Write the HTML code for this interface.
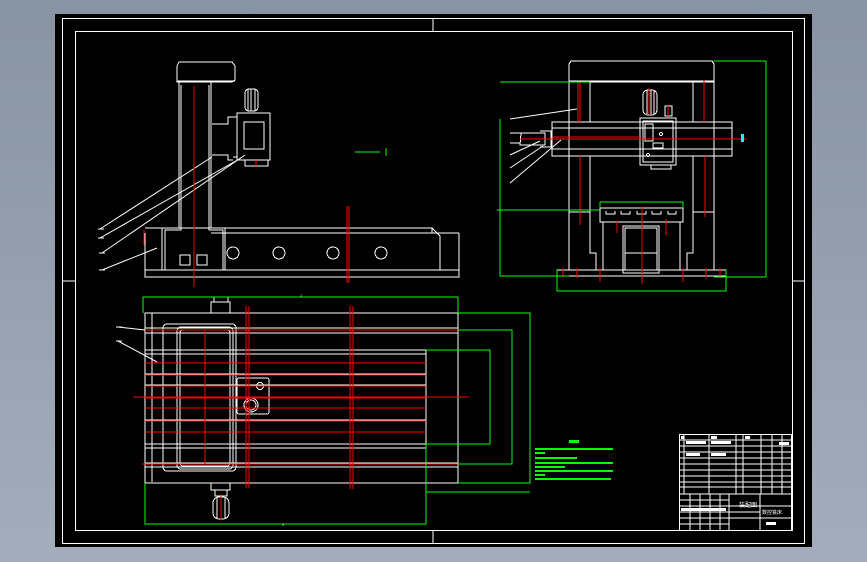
<!DOCTYPE html>
<html><head><style>
html,body{margin:0;padding:0;width:867px;height:562px;overflow:hidden;background:linear-gradient(180deg,#8893a4 0%,#a3adbb 100%);}
svg{position:absolute;left:0;top:0}
</style></head><body>
<svg width="867" height="562" viewBox="0 0 867 562" xmlns="http://www.w3.org/2000/svg" font-family="Liberation Sans, sans-serif" shape-rendering="crispEdges">
<rect x="55" y="14" width="757" height="533" fill="#000"/>
<g fill="none" stroke="#fff" stroke-width="1">
<rect x="62.5" y="18.5" width="742" height="525"/>
<rect x="75.5" y="31.5" width="717" height="499"/>
<line x1="62" y1="281" x2="75" y2="281"/><line x1="792" y1="281" x2="805" y2="281"/>
<line x1="433" y1="18" x2="433" y2="31"/><line x1="433" y1="530" x2="433" y2="543"/>
<path d="M177 66 L179 62 L232 62 L235 66 L235 80 L232 82 L177 82 Z"/>
<path d="M177 81 L235 81"/>
<path d="M179 82 L179 228 L162 228 L162 270 M211 82 L211 228 L225 228 L225 270"/>
<path d="M181 85 L181 230 L165 230 L165 270 M209 85 L209 230 L223 230 L223 270"/>
<path d="M145 233 L145 277 L459 277 L459 233 M145 228 L432 228 L432 233 L459 233 M145 270 L459 270 M211 233 L459 233"/>
<path d="M432 228 L440 236 L440 270"/>
<rect x="180" y="255" width="10" height="10"/><rect x="197" y="255" width="10" height="10"/>
<circle cx="233" cy="253" r="6"/><circle cx="279" cy="253" r="6"/><circle cx="333" cy="253" r="6"/><circle cx="381" cy="253" r="6"/>
<rect x="237" y="113" width="33" height="47"/><rect x="244" y="122" width="20" height="27"/>
<path d="M233 117 L237 117 L237 157 L233 157 M212 124 L228 124 L228 117 L233 117 M212 155 L228 155 L228 160 L233 160"/>
<rect x="245" y="89" width="13" height="22" rx="4"/><path d="M248 89 L248 111 M251 89 L251 111 M255 89 L255 111"/>
<rect x="245" y="160" width="23" height="6"/>
<path d="M100 229 L212 157 M100 238 L241 158 M102 253 L245 155 M102 270 L157 248" shape-rendering="auto"/>
<path d="M98 229 L104 229 M98 238 L104 238 M99 253 L105 253 M99 270 L105 270"/>
<path d="M569 64 L571 61 L712 61 L714 64 L714 82 L569 82 Z M569 81 L714 81"/>
<path d="M569 82 L569 270 M590 82 L590 122 M590 156 L590 253 L596 253 L596 270 M693 82 L693 122 M693 156 L693 253 L687 253 L687 270 M714 82 L714 270 M569 212 L590 212 M693 212 L714 212"/>
<path d="M552 122 L732 122 L732 156 L552 156 Z M552 128 L732 128 M552 149 L732 149"/>
<path d="M640 118 L676 118 L676 165 L640 165 Z M643 121 L643 162 L673 162 L673 121 Z"/>
<path d="M645 124 L653 124 L653 141 L645 141 Z"/><rect x="653" y="143" width="10" height="5"/>
<circle cx="661" cy="134" r="1.5"/><circle cx="648" cy="155" r="1.5"/>
<rect x="643" y="90" width="14" height="25" rx="5"/><path d="M647 90 L647 114 M651 90 L651 114 M654 90 L654 114"/>
<rect x="665" y="106" width="7" height="10"/>
<rect x="651" y="165" width="20" height="4"/>
<path d="M521 133 L520 145 L545 145 L545 133 Z M540 131 L551 131 L551 147 L540 147"/>
<path d="M600 208 L683 208 L683 222 L600 222 Z M606 211 L606 214 L615 214 L615 211 M621 211 L621 214 L630 214 L630 211 M637 211 L637 214 L646 214 L646 211 M652 211 L652 214 L661 214 L661 211 M668 211 L668 214 L676 214 L676 211"/>
<path d="M603 222 L603 270 M680 222 L680 270 M623 226 L659 226 L659 273 L623 273 Z M625 228 L657 228 L657 270 L625 270 Z M625 253 L657 253"/>
<path d="M557 270 L726 270 L726 276 L557 276 Z"/>
<path d="M510 119 L577 109 M510 155 L540 141 M510 168 L543 146 M510 183 L561 140" shape-rendering="auto"/>
<path d="M510 133 L522 133 M510 143 L520 143"/>
<path d="M145 313 L458 313 L458 483 L145 483 Z M152 313 L152 482"/>
<path d="M145 328 L458 328 M145 333 L458 333 M145 350 L426 350 M145 354 L426 354 M145 363 L426 363 M145 374 L426 374 M145 385 L426 385 M145 397 L426 397 M145 408 L426 408 M145 420 L426 420 M145 432 L426 432 M145 444 L426 444 M145 448 L426 448 M145 463 L458 463 M145 467 L458 467 M426 350 L426 448"/>
<rect x="163" y="324" width="73" height="147" rx="4"/>
<rect x="177" y="327" width="56" height="142" rx="4"/>
<rect x="180" y="330" width="50" height="136" rx="3"/>
<path d="M211 313 L211 302 L230 302 L230 313 M214 302 L214 297 L228 297 L228 302"/>
<path d="M211 483 L211 490 L230 490 L230 483 M215 490 L215 496 L227 496 L227 490"/>
<rect x="213" y="497" width="16" height="22" rx="6"/><path d="M217 498 L217 518 M221 498 L221 518 M225 498 L225 518"/>
<rect x="237" y="378" width="32" height="36" rx="2"/>
<circle cx="251" cy="405" r="7"/><circle cx="251" cy="405" r="5"/><circle cx="260" cy="386" r="3.5"/>
<path d="M118 327 L145 330 M118 341 L157 362" shape-rendering="auto"/>
<path d="M116 327 L122 327 M116 341 L122 341"/>
</g>
<g stroke="#ff0000" stroke-width="1" fill="none">
<line x1="194" y1="86" x2="194" y2="287"/>
<line x1="347" y1="206" x2="347" y2="283"/><line x1="349" y1="206" x2="349" y2="283"/>
<line x1="144" y1="230" x2="144" y2="245"/><line x1="256" y1="160" x2="256" y2="167"/>
<line x1="578" y1="82" x2="578" y2="122"/><line x1="580" y1="82" x2="580" y2="122"/>
<line x1="580" y1="156" x2="580" y2="225"/><line x1="704" y1="80" x2="704" y2="122"/>
<line x1="705" y1="156" x2="705" y2="217"/>
<line x1="520" y1="139" x2="747" y2="139"/><line x1="553" y1="137" x2="640" y2="137"/>
<line x1="642" y1="207" x2="642" y2="284"/><line x1="649" y1="88" x2="649" y2="114"/><line x1="668" y1="106" x2="668" y2="116"/>
<line x1="563" y1="268" x2="563" y2="278"/><line x1="577" y1="268" x2="577" y2="278"/><line x1="600" y1="268" x2="600" y2="282"/>
<line x1="683" y1="268" x2="683" y2="282"/><line x1="706" y1="268" x2="706" y2="278"/><line x1="720" y1="268" x2="720" y2="278"/>
<line x1="617" y1="221" x2="617" y2="233"/><line x1="666" y1="219" x2="666" y2="235"/>
<line x1="145" y1="330" x2="458" y2="330"/><line x1="142" y1="464" x2="458" y2="464"/>
<line x1="145" y1="363" x2="426" y2="363"/><line x1="145" y1="375" x2="426" y2="375"/><line x1="145" y1="386" x2="426" y2="386"/>
<line x1="145" y1="398" x2="426" y2="398"/><line x1="145" y1="408" x2="426" y2="408"/><line x1="145" y1="421" x2="426" y2="421"/>
<line x1="145" y1="432" x2="426" y2="432"/>
<line x1="133" y1="397" x2="469" y2="397"/>
<line x1="246" y1="306" x2="246" y2="488"/><line x1="249" y1="306" x2="249" y2="488"/>
<line x1="350" y1="306" x2="350" y2="489"/><line x1="353" y1="306" x2="353" y2="489"/>
<line x1="205" y1="331" x2="205" y2="464"/><line x1="221" y1="494" x2="221" y2="520"/>
</g>
<g stroke="#00ff00" stroke-width="1" fill="none">
<path d="M500 119 L500 276 L569 276 M500 82 L590 82 M766 61 L766 277 L714 277 M714 61 L766 61 M497 210 L600 210 M600 202 L683 202 L683 208 M600 202 L600 208"/>
<path d="M557 270 L557 291 L726 291 L726 270"/>
<path d="M143 297 L458 297 M143 297 L143 313 M458 297 L458 313 M145 483 L145 524 L426 524 L426 448"/>
<path d="M458 313 L530 313 L530 483 L458 483 M458 330 L512 330 L512 464 L458 464 M426 350 L490 350 L490 444 L426 444 M426 444 L426 492 L530 492"/>
<line x1="355" y1="152" x2="380" y2="152"/><line x1="386" y1="148" x2="386" y2="156"/>
</g>
<g fill="#00ff00" font-size="4">
<rect x="569" y="440" width="10" height="3"/>
<rect x="535" y="448" width="78" height="2"/><rect x="535" y="452" width="10" height="2"/>
<rect x="535" y="457" width="42" height="2"/><rect x="535" y="462" width="78" height="2"/>
<rect x="535" y="466" width="30" height="2"/><rect x="535" y="470" width="78" height="2"/>
<rect x="535" y="474" width="10" height="2"/><rect x="535" y="478" width="76" height="2"/>
</g>
<g fill="none" stroke="#fff" stroke-width="1">
<rect x="679.5" y="434.5" width="112" height="96"/>
<path d="M679 440 L792 440 M679 446 L792 446 M679 452 L792 452 M679 458 L792 458 M679 464 L792 464 M679 470 L792 470 M679 476 L792 476 M679 482 L792 482 M679 487 L792 487 M679 494 L792 494 M679 506 L792 506"/>
<path d="M684 434 L684 494 M709 434 L709 494 M736 434 L736 494 M743 434 L743 494 M761 434 L761 494 M772 434 L772 494 M782 434 L782 494"/>
<path d="M679 500 L729 500 M679 512 L729 512 M679 518 L729 518 M679 524 L729 524 M729 494 L729 530 M760 494 L760 530 M760 506 L792 506 M760 518 L792 518 M690 494 L690 530 M700 494 L700 530 M710 494 L710 530 M720 494 L720 530 M729 512 L760 512 M729 518 L760 518"/>
</g>
<g fill="#fff" font-size="6">
<text x="739" y="507">装配图</text><text x="762" y="514" font-size="5">数控铣床</text>
<rect x="766" y="522" width="10" height="3"/><rect x="681" y="508" width="45" height="3"/>
<rect x="681" y="436" width="3" height="3"/><rect x="711" y="436" width="6" height="3"/><rect x="745" y="436" width="5" height="3"/>
<rect x="686" y="441" width="20" height="3"/><rect x="711" y="441" width="20" height="3"/><rect x="779" y="442" width="10" height="3"/>
<rect x="686" y="453" width="14" height="3"/><rect x="711" y="453" width="15" height="3"/>
</g>
<g fill="#fff" font-size="4">
<text x="300" y="297">1</text><text x="282" y="526">2</text>
</g>
<rect x="741" y="134" width="3" height="8" fill="#00ffff"/>
</svg>
</body></html>
